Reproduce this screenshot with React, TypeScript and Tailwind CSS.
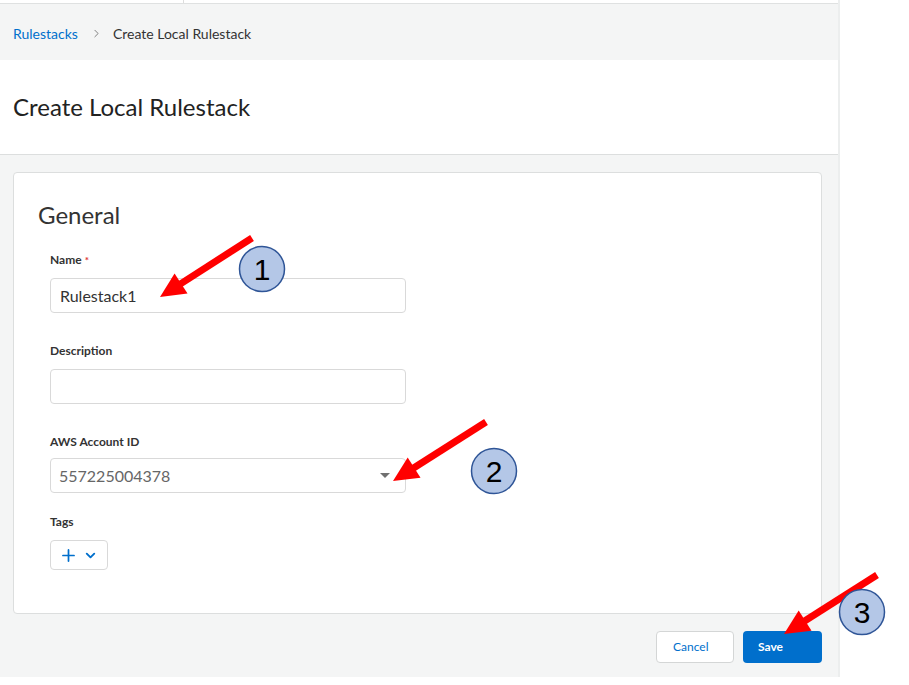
import { Plus, ChevronDown, ChevronRight } from "lucide-react"

type Pt = [number, number]

function Arrow({ from, to }: { from: Pt; to: Pt }) {
  const dx = to[0] - from[0]
  const dy = to[1] - from[1]
  const len = Math.hypot(dx, dy)
  const ux = dx / len
  const uy = dy / len
  const headLen = 25
  const half = 12
  const bx = to[0] - ux * headLen
  const by = to[1] - uy * headLen
  const p1 = `${bx - uy * half},${by + ux * half}`
  const p2 = `${bx + uy * half},${by - ux * half}`
  return (
    <g>
      <line x1={from[0]} y1={from[1]} x2={bx + ux * 2} y2={by + uy * 2} stroke="#ff0000" strokeWidth={7} />
      <polygon points={`${to[0]},${to[1]} ${p1} ${p2}`} fill="#ff0000" />
    </g>
  )
}

function Badge({ cx, cy, n }: { cx: number; cy: number; n: string }) {
  return (
    <g>
      <circle cx={cx} cy={cy} r={22.5} fill="#b4c7e7" stroke="#2f5597" strokeWidth={1.5} />
      <text
        x={cx}
        y={cy + 10.5}
        textAnchor="middle"
        fontSize={30}
        fontFamily="'Liberation Sans', Arial, sans-serif"
        fill="#000"
      >
        {n}
      </text>
    </g>
  )
}

function Label({ children, required }: { children: string; required?: boolean }) {
  return (
    <div className="text-[12px] leading-[16px] font-bold text-[#333]">
      {children}
      {required && <span className="text-[#d33] text-[10px] align-top ml-[3px]">*</span>}
    </div>
  )
}

export default function App() {
  return (
    <div className="relative w-[909px] h-[685px] bg-white overflow-hidden font-['Lato',sans-serif] text-[#333]">
      <div className="w-[840px] h-[677px] flex flex-col border-r-2 border-[#eceeee]">
        <div className="relative h-[4px] border-b border-[#dfe1e1] bg-white">
          <span className="absolute left-[183px] top-0 w-px h-[3px] bg-[#ddd]" />
        </div>
        <div className="h-[56px] bg-[#f4f5f5] flex items-center px-[13px] pt-[3px] text-[14px]">
          <span className="text-[#0070cc]">Rulestacks</span>
          <ChevronRight size={13} strokeWidth={1.5} className="text-[#666] ml-[12px] mr-[10px]" />
          <span className="text-[#333]">Create Local Rulestack</span>
        </div>
        <div className="h-[95px] bg-white border-b border-[#dcdede] flex items-center px-[13px] pb-[2px]">
          <h1 className="text-[24px] leading-[29px] text-[#222]">Create Local Rulestack</h1>
        </div>
        <div className="flex-1 bg-[#f4f5f5] pt-[17px] pl-[13px] pr-[16px] flex flex-col">
          <div className="h-[442px] bg-white border border-[#dcdede] rounded-[4px] pt-[27px] px-[24px]">
            <h2 className="text-[24px] leading-[29px] text-[#333]">General</h2>
            <div className="pl-[12px] w-[368px]">
              <div className="mt-[23px]">
                <Label required>Name</Label>
                <div className="mt-[10px] h-[35px] border border-[#d9d9d9] rounded-[4px] flex items-center px-[9px] text-[16px] text-[#333]">
                  Rulestack1
                </div>
              </div>
              <div className="mt-[30px]">
                <Label>Description</Label>
                <div className="mt-[10px] h-[35px] border border-[#d9d9d9] rounded-[4px]" />
              </div>
              <div className="mt-[30px]">
                <Label>AWS Account ID</Label>
                <div className="mt-[8px] h-[35px] border border-[#d9d9d9] rounded-[4px] flex items-center justify-between pl-[8px] pr-[15px] text-[16px] text-[#666]">
                  <span>557225004378</span>
                  <span className="w-0 h-0 border-l-[5px] border-r-[5px] border-t-[5px] border-l-transparent border-r-transparent border-t-[#707070]" />
                </div>
              </div>
              <div className="mt-[21px]">
                <Label>Tags</Label>
                <div className="mt-[10px] w-[58px] h-[30px] border border-[#d9d9d9] rounded-[4px] flex items-center pl-[8px] gap-[5px] text-[#006fcc]">
                  <Plus size={19} strokeWidth={2.2} />
                  <ChevronDown size={15} strokeWidth={3} />
                </div>
              </div>
            </div>
          </div>
          <div className="mt-[17px] flex justify-end gap-[9px]">
            <button className="w-[78px] h-[32px] bg-white border border-[#d4d6d6] rounded-[4px] text-[12px] text-[#0070cc] text-left pl-[16px]">
              Cancel
            </button>
            <button className="w-[79px] h-[32px] bg-[#006fcc] rounded-[4px] text-[12px] font-bold text-white text-left pl-[15px]">
              Save
            </button>
          </div>
        </div>
      </div>
      <svg className="absolute left-0 top-0 pointer-events-none" width={909} height={685}>
        <Arrow from={[252, 238]} to={[160, 297]} />
        <Badge cx={262} cy={269} n="1" />
        <Arrow from={[486, 422]} to={[393, 481]} />
        <Badge cx={494} cy={471} n="2" />
        <Arrow from={[877, 575]} to={[784, 634]} />
        <Badge cx={862} cy={612} n="3" />
      </svg>
    </div>
  )
}
